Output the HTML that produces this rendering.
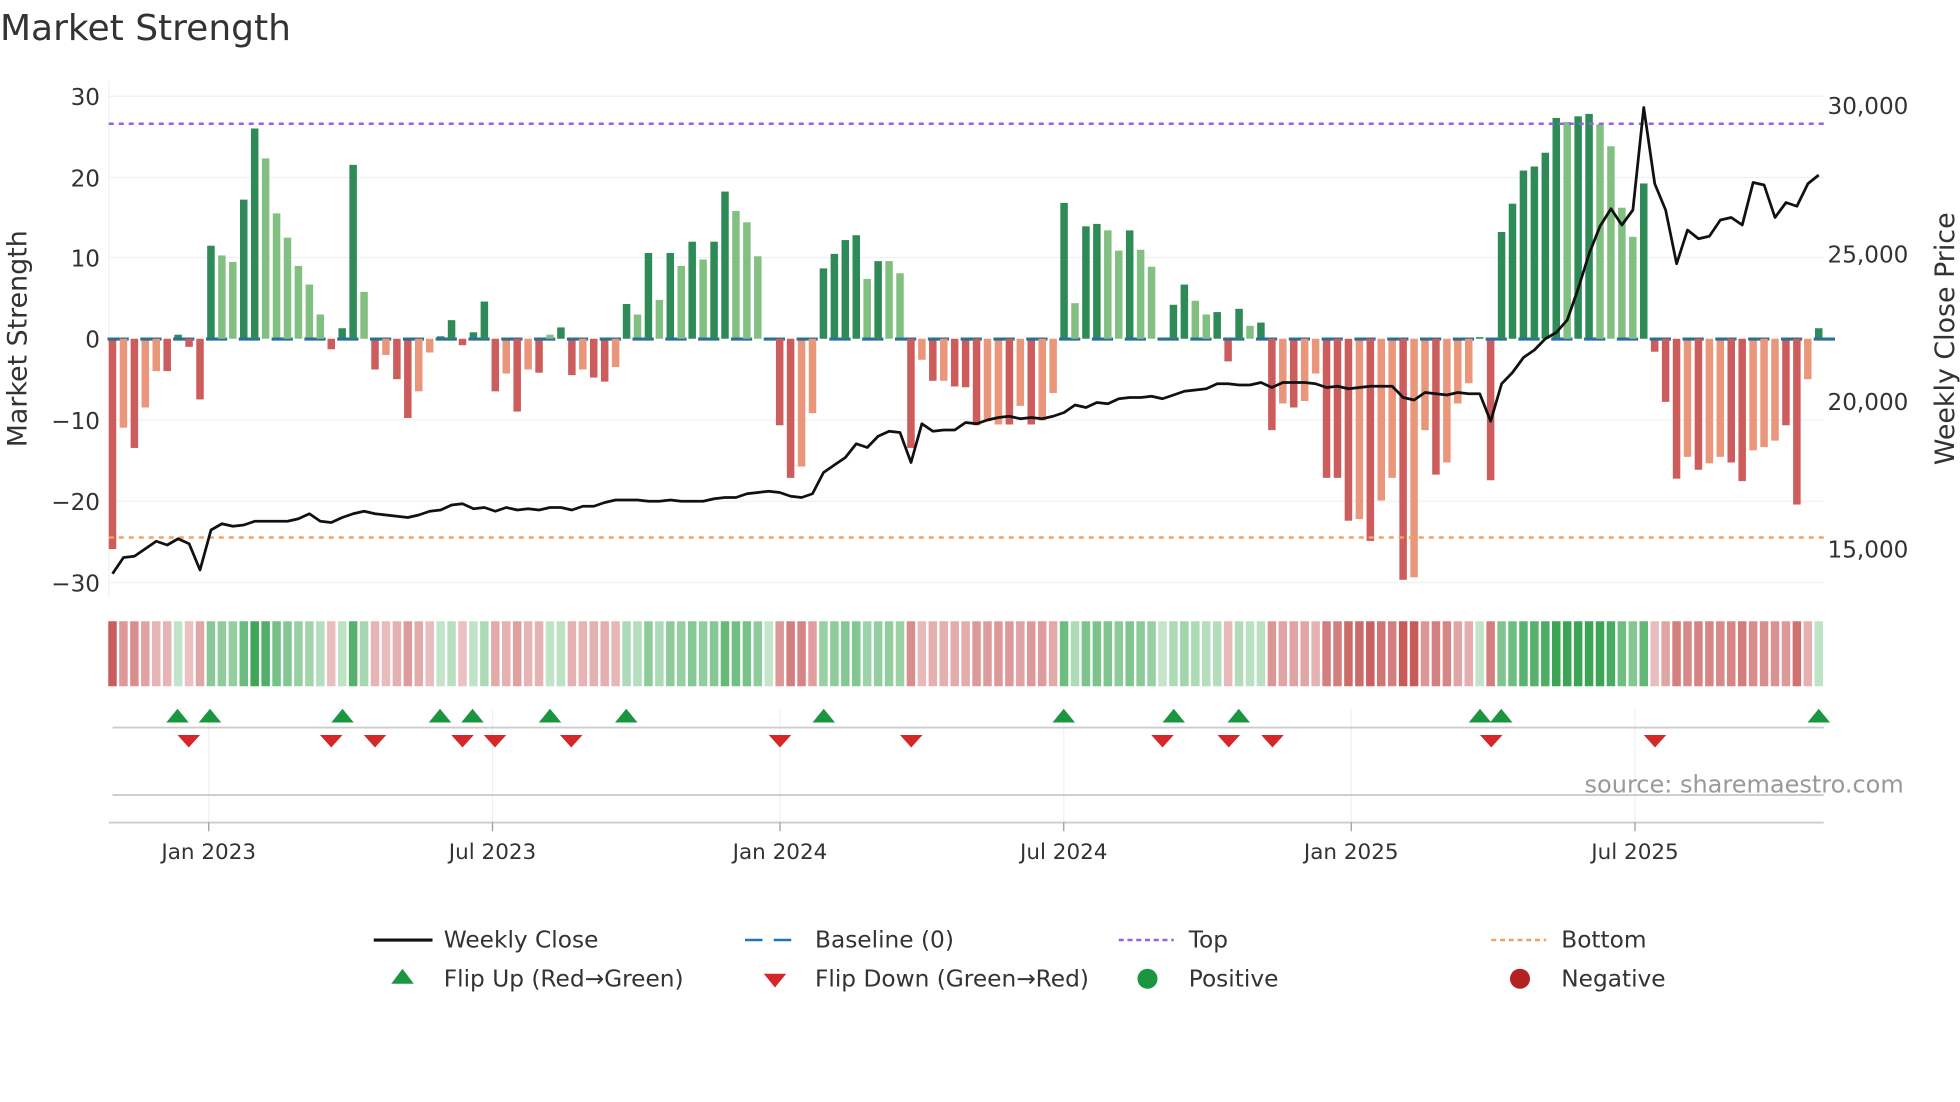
<!DOCTYPE html>
<html><head><meta charset="utf-8"><style>
html,body{margin:0;padding:0;background:#fff;}
svg{display:block;font-family:"DejaVu Sans","Liberation Sans",sans-serif;}
</style></head><body>
<svg id="s" width="1960" height="1102" viewBox="0 0 1568 881.6" xmlns="http://www.w3.org/2000/svg">
<rect width="1568" height="882" fill="#fff"/>
<text x="0" y="32" font-size="28.8" fill="#333">Market Strength</text>
<g stroke="#eef0f4" stroke-width="1">
<line x1="87" x2="1459" y1="77" y2="77"/><line x1="87" x2="1459" y1="142" y2="142"/>
<line x1="87" x2="1459" y1="206" y2="206"/><line x1="87" x2="1459" y1="336" y2="336"/>
<line x1="87" x2="1459" y1="401" y2="401"/><line x1="87" x2="1459" y1="466" y2="466"/>
<line x1="87" x2="87" y1="65" y2="478"/>
</g>
<g font-size="18.5" fill="#333" text-anchor="end">
<text x="80" y="84">30</text><text x="80" y="149">20</text><text x="80" y="213">10</text>
<text x="80" y="278">0</text><text x="80" y="343">−10</text><text x="80" y="408">−20</text><text x="80" y="473">−30</text>
</g>
<g font-size="18.5" fill="#333">
<text x="1462" y="91">30,000</text><text x="1462" y="210">25,000</text><text x="1462" y="328">20,000</text><text x="1462" y="446">15,000</text>
</g>
<text transform="translate(21,271) rotate(-90)" font-size="21.5" fill="#333" text-anchor="middle">Market Strength</text>
<text transform="translate(1563,271) rotate(-90)" font-size="21.5" fill="#333" text-anchor="middle">Weekly Close Price</text>
<g id="bars"></g>
<line x1="87" x2="1459" y1="99" y2="99" stroke="#9b5de5" stroke-width="2" stroke-dasharray="4,4"/>
<line x1="87" x2="1459" y1="430" y2="430" stroke="#f4a261" stroke-width="2" stroke-dasharray="4,4"/>
<polyline id="price" fill="none" stroke="#111" stroke-width="2.2" stroke-linejoin="round"/>
<g id="heat"></g>
<g stroke="#eef0f4"><line x1="167" x2="167" y1="567" y2="658"/><line x1="394" x2="394" y1="567" y2="658"/><line x1="624" x2="624" y1="567" y2="658"/><line x1="851" x2="851" y1="567" y2="658"/><line x1="1081" x2="1081" y1="567" y2="658"/><line x1="1308" x2="1308" y1="567" y2="658"/></g>
<line x1="90" x2="1459" y1="582" y2="582" stroke="#ccc" stroke-width="1.5"/>
<line x1="90" x2="1459" y1="636" y2="636" stroke="#ccc" stroke-width="1.5"/>
<line x1="87" x2="1459" y1="658" y2="658" stroke="#ccc" stroke-width="1.5"/>
<g stroke="#999"><line x1="167" x2="167" y1="658" y2="665"/><line x1="394" x2="394" y1="658" y2="665"/><line x1="624" x2="624" y1="658" y2="665"/><line x1="851" x2="851" y1="658" y2="665"/><line x1="1081" x2="1081" y1="658" y2="665"/><line x1="1308" x2="1308" y1="658" y2="665"/></g>
<g id="marks"></g>
<text x="1523" y="634" font-size="19.2" fill="#999" text-anchor="end">source: sharemaestro.com</text>
<g font-size="17.2" fill="#333" text-anchor="middle">
<text x="167" y="687">Jan 2023</text><text x="394" y="687">Jul 2023</text><text x="624" y="687">Jan 2024</text>
<text x="851" y="687">Jul 2024</text><text x="1081" y="687">Jan 2025</text><text x="1308" y="687">Jul 2025</text>
</g>
<g font-size="18.6" fill="#333">
<line x1="299" x2="346" y1="752" y2="752" stroke="#111" stroke-width="2.5"/>
<text x="355" y="758">Weekly Close</text>
<line x1="596" x2="640" y1="752" y2="752" stroke="#1f77b4" stroke-width="2" stroke-dasharray="14,9"/>
<text x="652" y="758">Baseline (0)</text>
<line x1="895" x2="939" y1="752" y2="752" stroke="#9b5de5" stroke-width="2" stroke-dasharray="4,3"/>
<text x="951" y="758">Top</text>
<line x1="1193" x2="1237" y1="752" y2="752" stroke="#f4a261" stroke-width="2" stroke-dasharray="4,3"/>
<text x="1249" y="758">Bottom</text>
<polygon points="313,787 331,787 322,775" fill="#1a9641"/>
<text x="355" y="789">Flip Up (Red→Green)</text>
<polygon points="611,779 629,779 620,790" fill="#d62728"/>
<text x="652" y="789">Flip Down (Green→Red)</text>
<circle cx="918" cy="783" r="8" fill="#1a9641"/>
<text x="951" y="789">Positive</text>
<circle cx="1216" cy="783" r="8" fill="#b22222"/>
<text x="1249" y="789">Negative</text>
</g>
</svg>
<script>
var V=[[-26,1],[-11,0],[-13.5,1],[-8.5,0],[-4,0],[-4,1],[0.5,1],[-1,1],[-7.5,1],[11.5,1],[10.3,0],[9.5,0],[17.2,1],[26,1],[22.3,0],[15.5,0],[12.5,0],[9,0],[6.7,0],[3,0],[-1.3,1],[1.3,1],[21.5,1],[5.8,0],[-3.8,1],[-2,0],[-5,1],[-9.8,1],[-6.5,0],[-1.7,0],[0.3,1],[2.3,1],[-0.8,1],[0.8,1],[4.6,1],[-6.5,1],[-4.3,0],[-9,1],[-3.8,0],[-4.2,1],[0.5,0],[1.4,1],[-4.5,1],[-3.8,0],[-4.8,1],[-5.3,1],[-3.5,0],[4.3,1],[3,0],[10.6,1],[4.8,0],[10.6,1],[9,0],[12,1],[9.8,0],[12,1],[18.2,1],[15.8,0],[14.4,0],[10.2,0],[0,1],[-10.7,1],[-17.2,1],[-15.8,0],[-9.2,0],[8.7,1],[10.5,1],[12.2,1],[12.8,1],[7.4,0],[9.6,1],[9.6,0],[8.1,0],[-13.5,1],[-2.6,0],[-5.2,1],[-5.2,0],[-5.9,1],[-6,1],[-10.7,1],[-10.2,0],[-10.6,0],[-10.6,1],[-8.3,0],[-10.6,1],[-10.1,0],[-6.7,0],[16.8,1],[4.4,0],[13.9,1],[14.2,1],[13.4,0],[10.9,0],[13.4,1],[11,0],[8.9,0],[0,1],[4.2,1],[6.7,1],[4.7,0],[3,0],[3.3,1],[-2.8,1],[3.7,1],[1.6,0],[2,1],[-11.3,1],[-8,0],[-8.5,1],[-7.7,0],[-4.3,0],[-17.2,1],[-17.2,1],[-22.5,1],[-22.3,0],[-25,1],[-20,0],[-17.2,0],[-29.8,1],[-29.5,0],[-11.3,0],[-16.8,1],[-15.3,0],[-8,0],[-5.5,0],[0.2,1],[-17.5,1],[13.2,1],[16.7,1],[20.8,1],[21.3,1],[23,1],[27.3,1],[26.8,0],[27.5,1],[27.8,1],[26.5,0],[23.8,0],[16.2,0],[12.6,0],[19.2,1],[-1.6,1],[-7.8,1],[-17.3,1],[-14.6,0],[-16.2,1],[-15.4,0],[-14.6,0],[-15.3,1],[-17.6,1],[-13.8,0],[-13.4,0],[-12.6,0],[-10.7,1],[-20.5,1],[-5,0],[1.3,1]];
var P=[459,446,445,439,433,436,431,435,456,424,419,421,420,417,417,417,417,415,411,417,418,414,411,409,411,412,413,414,412,409,408,404,403,407,406,409,406,408,407,408,406,406,408,405,405,402,400,400,400,401,401,400,401,401,401,399,398,398,395,394,393,394,397,398,395,378,372,366,355,358,349,345,346,370,339,345,344,344,338,339,336,334,333,335,334,335,333,330,324,326,322,323,319,318,318,317,319,316,313,312,311,307,307,308,308,306,310,306,306,306,307,310,309,311,310,309,309,309,318,320,314,315,316,314,315,315,337,307,298,286,280,271,266,256,231,203,181,167,180,168,86,147,168,211,184,191,189,176,174,180,146,148,174,162,165,147,140];
var NS="http://www.w3.org/2000/svg";
function el(p,t,a){var e=document.createElementNS(NS,t);for(var k in a)e.setAttribute(k,a[k]);document.getElementById(p).appendChild(e);return e;}
function mix(a,b,t){var r=[];for(var i=0;i<3;i++)r.push(Math.round(a[i]+(b[i]-a[i])*t));return "rgb("+r.join(",")+")";}
var step=(1455-90)/156;
var pts=[];
for(var i=0;i<V.length;i++){
 var x=90+i*step,v=V[i][0],d=V[i][1];
 var col=v>=0?(d?"#2e8b57":"#82c082"):(d?"#cd5c5c":"#e9967a");
 var y0=271,y1=271-v*6.47;
 if(Math.abs(v)>0.05)el("bars","rect",{x:x-3,y:Math.min(y0,y1),width:6,height:Math.abs(y1-y0),fill:col});
 if(i%3==0)el("bars","rect",{x:x-4,y:270,width:17,height:2.5,fill:"#2a6f97"});
 var t=Math.min(1,0.12+Math.abs(v)/30);
 var hc=v>=0?mix([214,238,218],[60,165,85],t):mix([240,210,210],[200,90,90],t);
 el("heat","rect",{x:x-3.4,y:497,width:6.8,height:52,fill:hc});
 pts.push(x.toFixed(1)+","+P[i]);
}
document.getElementById("price").setAttribute("points",pts.join(" "));
[142,168,274,352,378,440,501,659,851,939,991,1184,1201,1455].forEach(function(x){el("marks","polygon",{points:(x-9)+",578 "+(x+9)+",578 "+x+",567",fill:"#1a9641"});});
[151,265,300,370,396,457,624,729,930,983,1018,1193,1324].forEach(function(x){el("marks","polygon",{points:(x-9)+",588 "+(x+9)+",588 "+x+",598",fill:"#d62728"});});
</script>
</body></html>
